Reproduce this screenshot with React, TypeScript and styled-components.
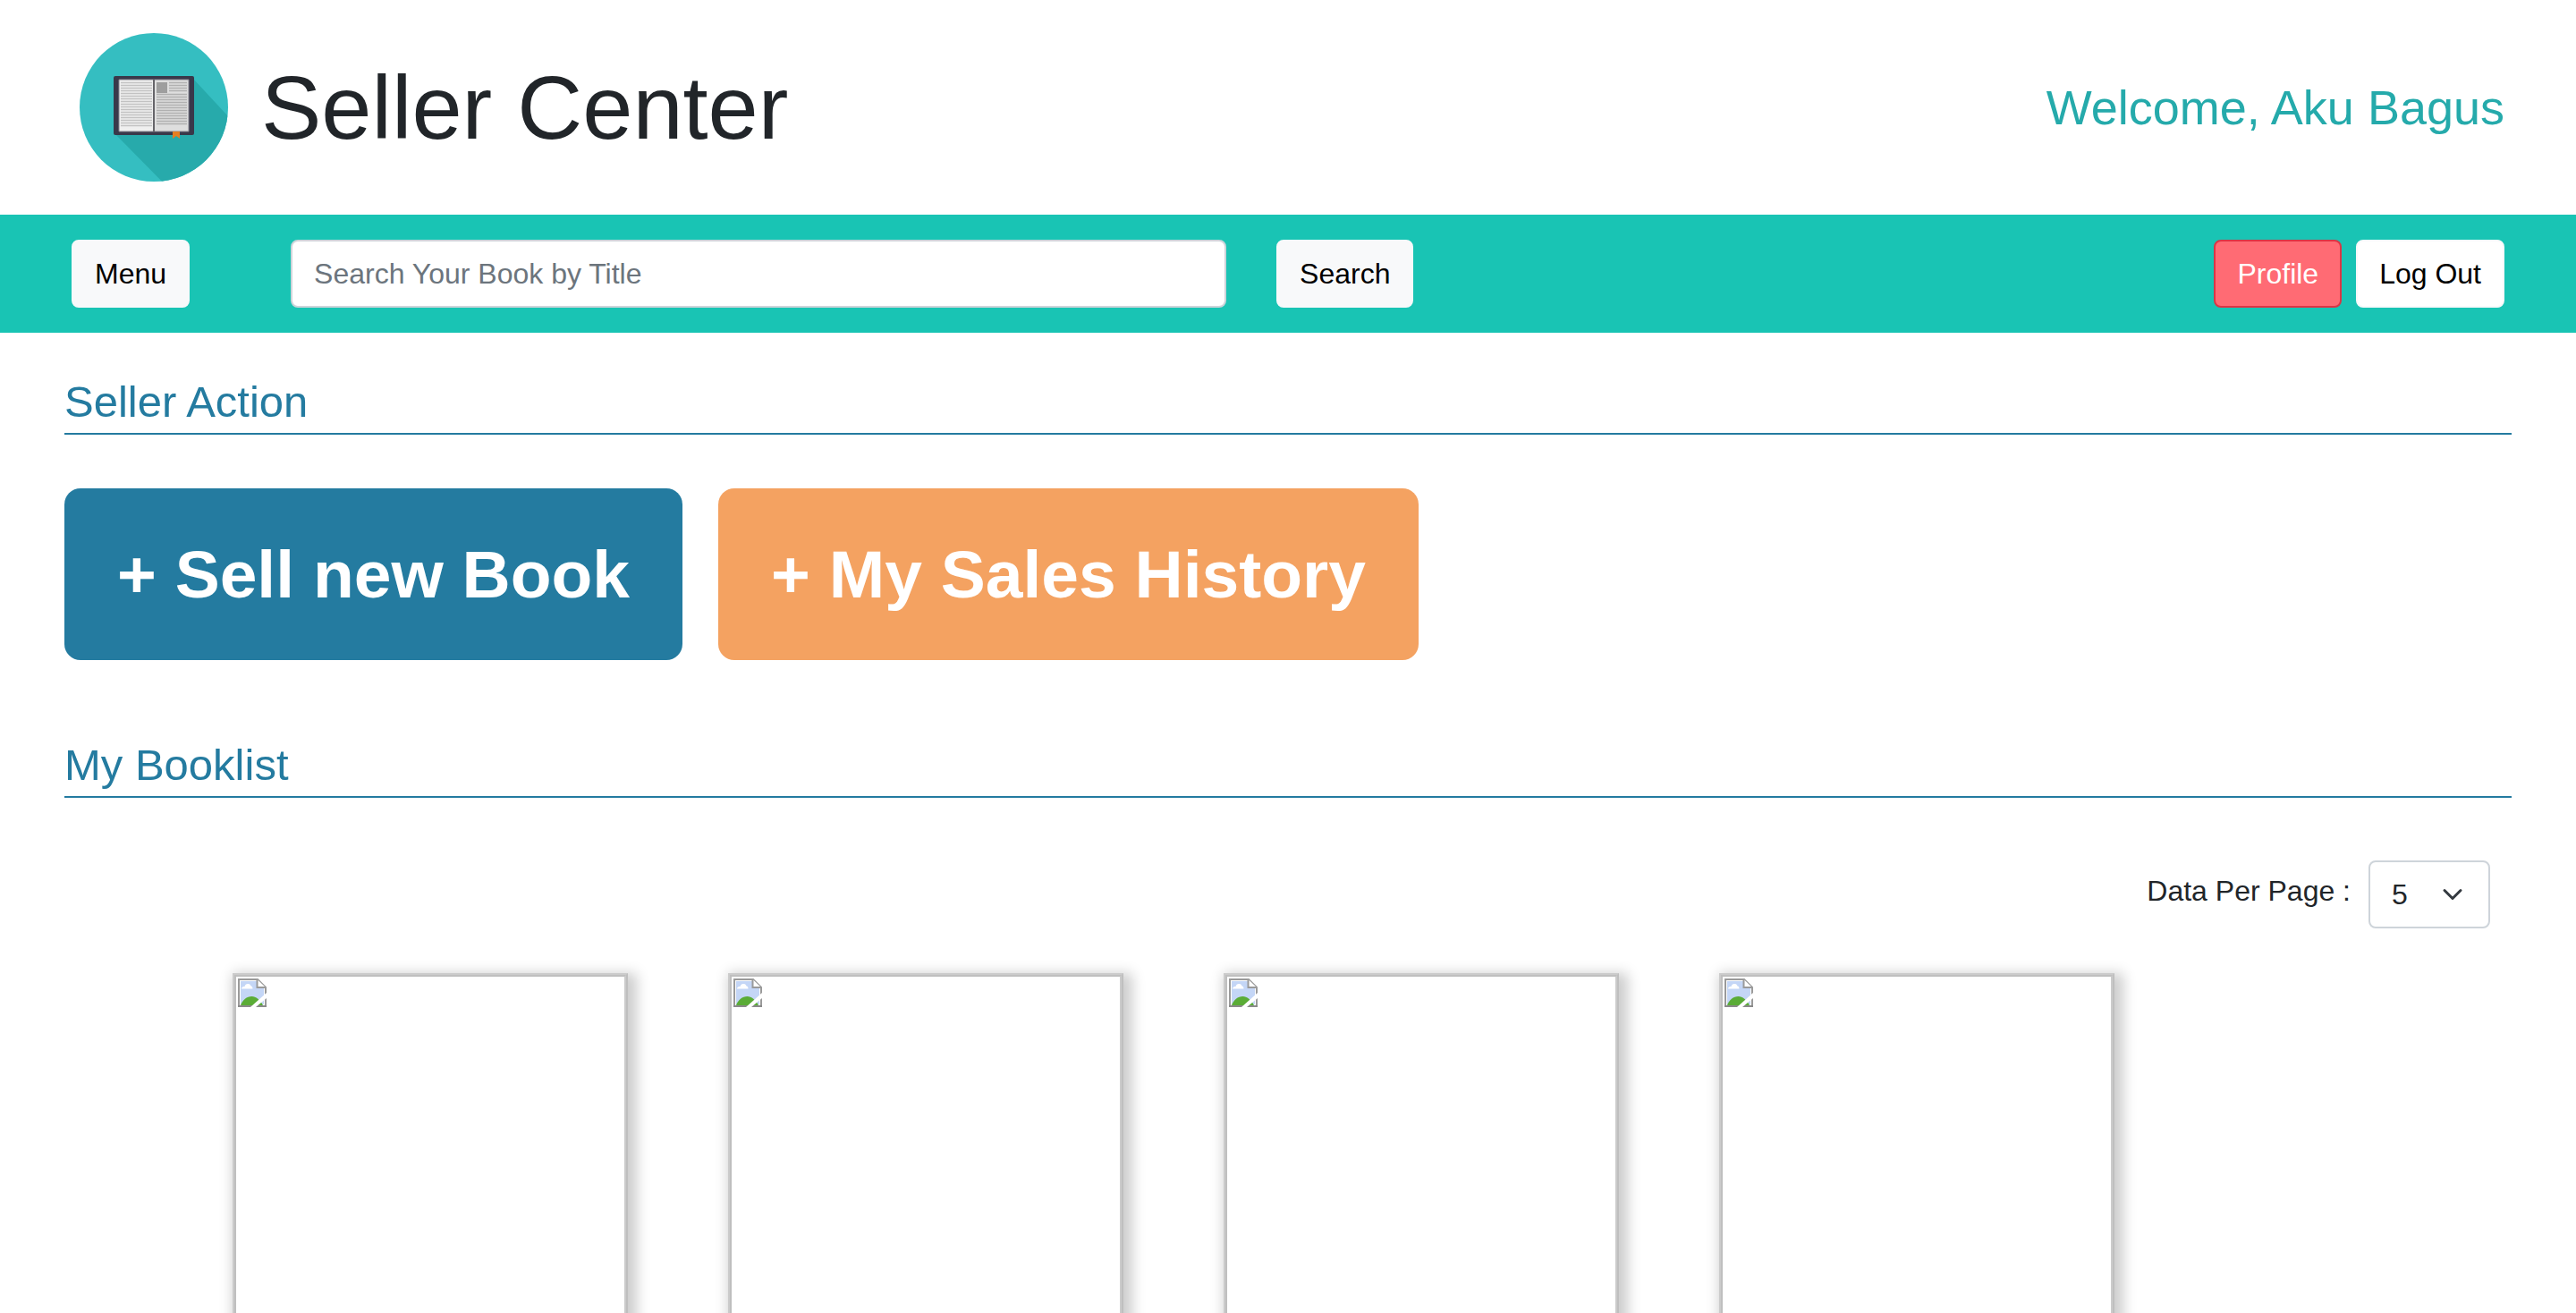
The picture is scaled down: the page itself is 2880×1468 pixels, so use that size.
import React from "react";
import styled, { createGlobalStyle } from "styled-components";

const GlobalStyle = createGlobalStyle`
  *, *::before, *::after { box-sizing: border-box; }
  body {
    margin: 0;
    background: #ffffff;
    color: #212529;
    font-family: "Liberation Sans", Arial, sans-serif;
    font-size: 32px;
    line-height: 48px;
  }
  button, input, select { font: inherit; }
`;

const Page = styled.div`
  height: 100vh;
  overflow: hidden;
`;

const Header = styled.header`
  display: flex;
  align-items: center;
  justify-content: space-between;
  height: 240px;
  padding: 0 80px 0 88px;
`;

const Brand = styled.div`
  display: flex;
  align-items: center;
  gap: 36px;
`;

const Title = styled.h1`
  margin: 0;
  font-size: 101px;
  font-weight: 400;
  line-height: 120px;
`;

const Welcome = styled.p`
  margin: 0;
  color: #25aaab;
  font-size: 54px;
  line-height: 66px;
`;

const NavBar = styled.nav`
  display: flex;
  align-items: center;
  justify-content: space-between;
  padding: 28px 80px;
  background: #19c4b4;
`;

const SearchForm = styled.form`
  display: flex;
  align-items: center;
  gap: 56px;
  margin-left: 113px;
  margin-right: auto;
`;

const SearchInput = styled.input`
  width: 1046px;
  height: 76px;
  padding: 0 24px;
  border: 2px solid #ced4da;
  border-radius: 8px;
  background: #ffffff;
  color: #212529;
  outline: none;
  &::placeholder {
    color: #6c757d;
    opacity: 1;
  }
`;

type Tone = "light" | "danger" | "white";

const tones: Record<Tone, { bg: string; border: string; text: string }> = {
  light: { bg: "#f8f9fa", border: "#f8f9fa", text: "#000000" },
  danger: { bg: "#ff6b74", border: "#dc3545", text: "#ffffff" },
  white: { bg: "#ffffff", border: "#f8f9fa", text: "#000000" },
};

const Button = styled.button<{ $tone: Tone }>`
  height: 76px;
  padding: 0 24px;
  border: 2px solid ${(p) => tones[p.$tone].border};
  border-radius: 8px;
  background: ${(p) => tones[p.$tone].bg};
  color: ${(p) => tones[p.$tone].text};
  cursor: pointer;
`;

const Account = styled.div`
  display: flex;
  gap: 16px;
`;

const Main = styled.main`
  padding: 0 72px;
`;

const SectionTitle = styled.h2`
  margin: 0;
  padding: 48px 0 6px;
  border-bottom: 2px solid #247ba0;
  color: #247ba0;
  font-size: 49px;
  font-weight: 400;
  line-height: 58px;
`;

const Actions = styled.div`
  display: flex;
  gap: 40px;
  padding: 60px 0 40px;
`;

const ActionButton = styled.button<{ $color: string }>`
  height: 192px;
  padding: 0 59px;
  border: 0;
  border-radius: 18px;
  background: ${(p) => p.$color};
  color: #ffffff;
  font-size: 75px;
  font-weight: 700;
  cursor: pointer;
`;

const PageSize = styled.div`
  display: flex;
  justify-content: flex-end;
  gap: 20px;
  padding: 70px 24px 50px;
`;

const PageSizeLabel = styled.label`
  padding-top: 10px;
`;

const SelectWrap = styled.div`
  display: grid;
  align-items: center;
  & > * {
    grid-area: 1 / 1;
  }
  & > svg {
    justify-self: end;
    margin-right: 30px;
    pointer-events: none;
  }
`;

const Select = styled.select`
  appearance: none;
  width: 136px;
  height: 76px;
  padding: 0 24px;
  border: 2px solid #ced4da;
  border-radius: 8px;
  background: #ffffff;
  color: #212529;
`;

const BookGrid = styled.ul`
  display: grid;
  grid-template-columns: repeat(4, 442px);
  gap: 112px;
  margin: 0;
  padding: 0 188px;
  list-style: none;
`;

const BookCover = styled.li`
  height: 640px;
  border: 2px solid;
  border-color: #cbcbcb #bfbfbf #bfbfbf #cbcbcb;
  box-shadow: 5px 5px 14px 5px rgba(0, 0, 0, 0.2);
`;

const CoverFrame = styled.div`
  height: 100%;
  padding: 2px;
  border: 2px solid;
  border-color: #bfbfbf #cbcbcb #cbcbcb #bfbfbf;
  & > svg {
    display: block;
  }
`;

const leftLines = Array.from({ length: 17 }, (_, i) => 52 + i * 3);
const rightLines = Array.from({ length: 12 }, (_, i) => 65 + i * 3);
const shortLines = [52, 55, 58, 61];

function BookLogo() {
  return (
    <svg width="168" height="168" viewBox="0 0 168 168" role="img" aria-label="Book">
      <defs>
        <clipPath id="disc">
          <circle cx="84" cy="84" r="83" />
        </clipPath>
      </defs>
      <circle cx="84" cy="84" r="83" fill="#35bec1" />
      <path d="M128 52L180 108V180H106L40 113Z" fill="#27aaab" clipPath="url(#disc)" />
      <rect x="39" y="49" width="90" height="66" rx="2" fill="#39384a" />
      <rect x="45" y="53" width="38" height="58" fill="#efefef" />
      <rect x="85" y="53" width="38" height="58" fill="#dedede" />
      <path d="M45 53H123M45 111H123" stroke="#85848e" strokeWidth="1" />
      <path d="M45 53V111M123 53V111" stroke="#85848e" strokeWidth="1" />
      <rect x="83" y="53" width="2" height="58" fill="#66656a" />
      <g stroke="#c2c2c2" strokeWidth="1.5">
        {leftLines.map((y) => (
          <path key={y} d={`M47 ${y + 4.5}H82`} />
        ))}
      </g>
      <g stroke="#b0b0b0" strokeWidth="1.5">
        {shortLines.map((y) => (
          <path key={y} d={`M101 ${y + 4.5}H121`} />
        ))}
        {rightLines.map((y) => (
          <path key={y} d={`M87 ${y + 4.5}H121`} />
        ))}
      </g>
      <rect x="87" y="56" width="12" height="12" fill="#9e9e9e" />
      <path d="M105 111H113V119L109 116L105 119Z" fill="#e67e22" />
    </svg>
  );
}

function Chevron() {
  return (
    <svg width="24" height="24" viewBox="0 0 16 16" aria-hidden="true">
      <path
        d="M2 5l6 6 6-6"
        fill="none"
        stroke="#343a40"
        strokeWidth="2"
        strokeLinecap="round"
        strokeLinejoin="round"
      />
    </svg>
  );
}

function MissingImage() {
  return (
    <svg width="32" height="32" viewBox="0 0 32 32" role="img" aria-label="Book cover">
      <path d="M1 1H22L31 10V31H1Z" fill="#ffffff" stroke="#9a9a9a" strokeWidth="2" />
      <path d="M3 3H21V11H29V29H3Z" fill="#c4d6f6" />
      <path d="M4 11.5C4 9.5 6 9 7.500 9C8 6.5 10 5.5 11.500 6C13.500 6 14.500 8 14.500 8.500C16 8.500 16.500 10 16.500 11.500Z" fill="#ffffff" />
      <path d="M3 30C5 24 10 20 15.500 20C20 20 25 24 28 30Z" fill="#5aac36" />
      <path d="M21.500 1V10H31" fill="#ffffff" stroke="#9a9a9a" strokeWidth="2" />
      <path d="M0 31H32" stroke="#8a8a8a" strokeWidth="2" />
      <path d="M14 32L32 16V22L20 32Z" fill="#ffffff" />
    </svg>
  );
}

const books = ["book-1", "book-2", "book-3", "book-4"];

export default function App() {
  return (
    <Page>
      <GlobalStyle />
      <Header>
        <Brand>
          <BookLogo />
          <Title>Seller Center</Title>
        </Brand>
        <Welcome>Welcome, Aku Bagus</Welcome>
      </Header>
      <NavBar>
        <Button type="button" $tone="light">Menu</Button>
        <SearchForm onSubmit={(e) => e.preventDefault()}>
          <SearchInput type="text" aria-label="Search Your Book by Title" placeholder="Search Your Book by Title" />
          <Button type="submit" $tone="light">Search</Button>
        </SearchForm>
        <Account>
          <Button type="button" $tone="danger">Profile</Button>
          <Button type="button" $tone="white">Log Out</Button>
        </Account>
      </NavBar>
      <Main>
        <SectionTitle>Seller Action</SectionTitle>
        <Actions>
          <ActionButton type="button" $color="#247ba0">+ Sell new Book</ActionButton>
          <ActionButton type="button" $color="#f4a261">+ My Sales History</ActionButton>
        </Actions>
        <SectionTitle>My Booklist</SectionTitle>
        <PageSize>
          <PageSizeLabel htmlFor="page-size">Data Per Page :</PageSizeLabel>
          <SelectWrap>
            <Select id="page-size" defaultValue="5">
              <option>5</option>
              <option>10</option>
              <option>15</option>
            </Select>
            <Chevron />
          </SelectWrap>
        </PageSize>
        <BookGrid>
          {books.map((id) => (
            <BookCover key={id}>
              <CoverFrame>
                <MissingImage />
              </CoverFrame>
            </BookCover>
          ))}
        </BookGrid>
      </Main>
    </Page>
  );
}
